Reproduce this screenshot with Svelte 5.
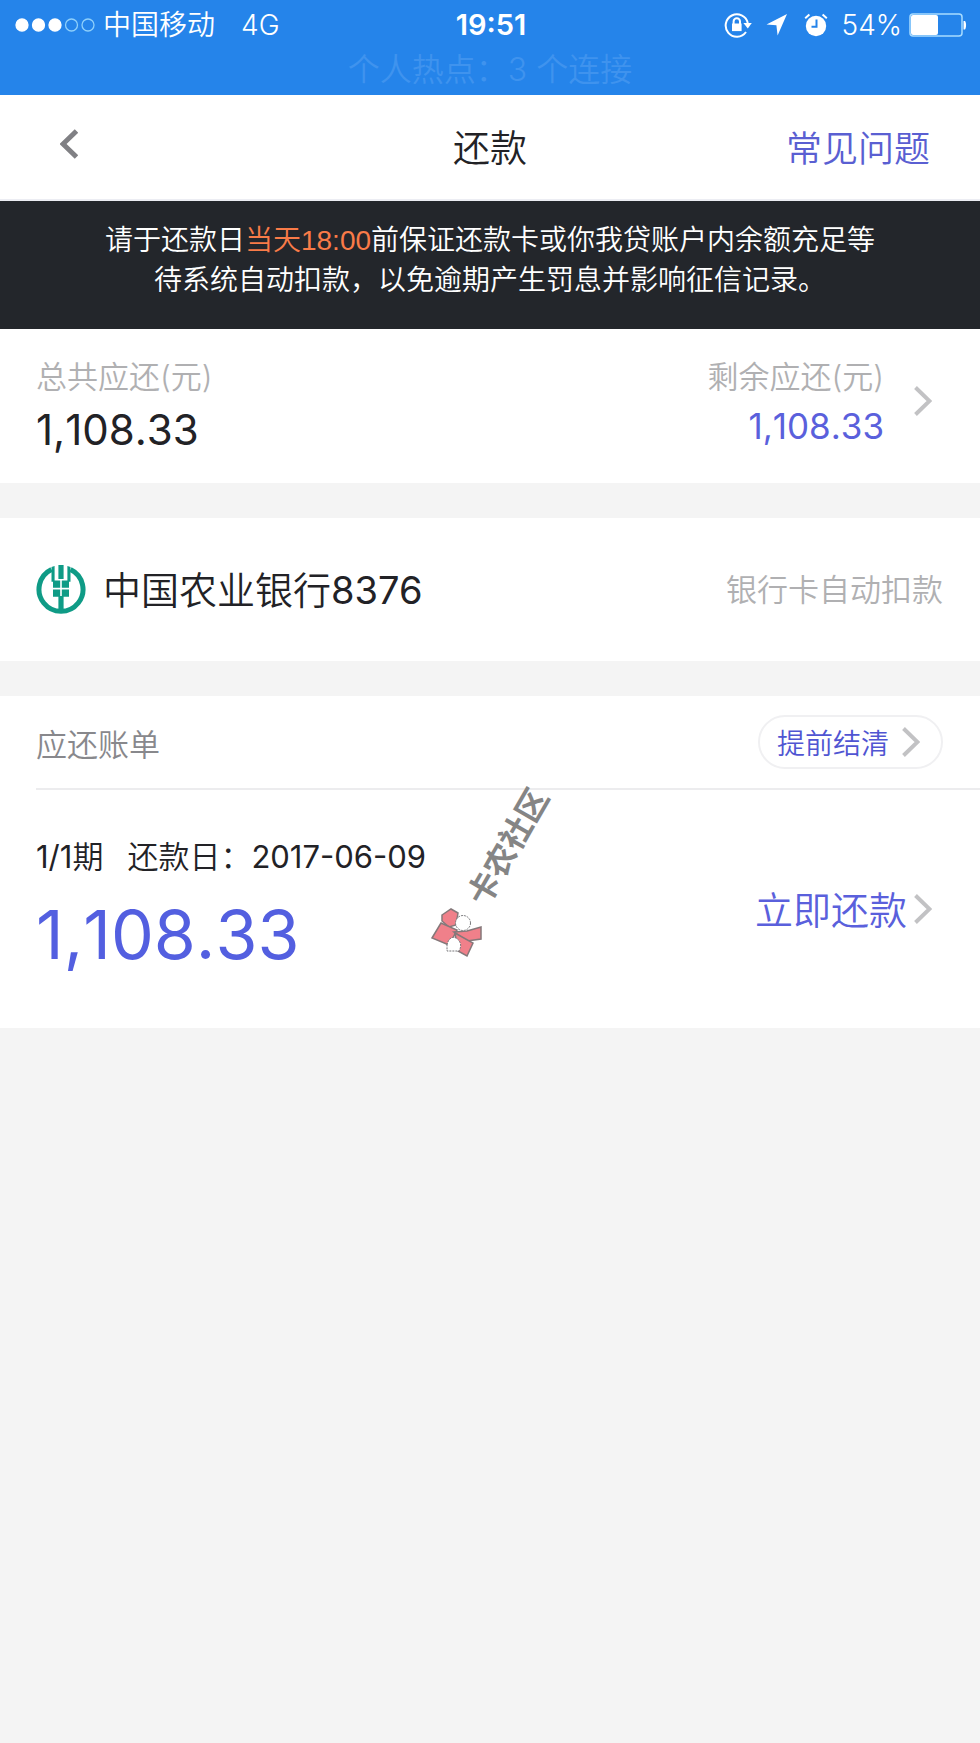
<script lang="ts">
	const signal = 3;
	const battery = 54;
	const total = "1,108.33";
	const remaining = "1,108.33";
	const bank = { name: "中国农业银行", tail: "8376" };
	const bill = { period: "1/1", date: "2017-06-09", amount: "1,108.33" };
</script>

{#snippet chevron()}
	<svg class="chevron" viewBox="0 0 18 30" aria-hidden="true">
		<path d="M1.5 1.5 15.5 15 1.5 28.5" />
	</svg>
{/snippet}

<div class="page">
	<div class="status">
		<div class="status-row">
			<div class="side">
				<svg class="dots" viewBox="0 0 80 14" aria-hidden="true">
					{#each Array(5) as _, i}
						<circle class:on={i < signal} cx={7 + i * 16.5} cy="7" r="6" />
					{/each}
				</svg>
				<span class="carrier">中国移动</span>
				<span>4G</span>
			</div>
			<strong>19:51</strong>
			<div class="side right">
				<svg class="lock" viewBox="0 0 28 26" aria-hidden="true">
					<path class="line" d="M22 20A11.2 11.2 0 1 1 23.8 11" />
					<path d="M19.4 11h8.4l-4 5.4z" />
					<path d="M8 11.5h9.6v7.6H8z" />
					<path class="line" d="M9.6 12V9.4a3.2 3.2 0 0 1 6.4 0V12" />
				</svg>
				<svg class="arrow" viewBox="0 0 24 24" aria-hidden="true">
					<path d="M22 1 1.5 11.4 11.4 12.2 12.6 22.5z" />
				</svg>
				<svg class="alarm" viewBox="0 0 24 24" aria-hidden="true">
					<circle cx="12" cy="13" r="10.2" />
					<path class="line" d="M1.2 5.2 5.4 1.5M22.8 5.2 18.6 1.5" />
					<path class="hand" d="M12.5 6.5v7.2H7.5" />
				</svg>
				<span>{battery}%</span>
				<svg class="battery" viewBox="0 0 58 24" aria-hidden="true">
					<rect class="line" x="1" y="1" width="52" height="22" rx="3" />
					<rect x="2" y="2" width={battery * 0.5} height="20" rx="2" />
					<path d="M54.5 8h1.5c1.4 1.2 1.4 7.2 0 8.4h-1.5z" />
				</svg>
			</div>
		</div>
		<div class="hotspot">个人热点：3 个连接</div>
	</div>

	<header>
		<button class="back" aria-label="返回">
			<svg viewBox="0 0 18 30" aria-hidden="true">
				<path d="M16.5 2 3 15 16.5 28" />
			</svg>
		</button>
		<h1>还款</h1>
		<a href="#faq">常见问题</a>
	</header>

	<p class="notice">
		请于还款日<em>当天18:00</em>前保证还款卡或你我贷账户内余额充足等<br />待系统自动扣款，以免逾期产生罚息并影响征信记录。
	</p>

	<section class="summary">
		<div>
			<div class="label">总共应还(元)</div>
			<div class="total">{total}</div>
		</div>
		<a class="remaining" href="#remaining">
			<span>
				<span class="label">剩余应还(元)</span>
				<span class="rest">{remaining}</span>
			</span>
			{@render chevron()}
		</a>
	</section>

	<section class="bank">
		<svg class="logo" viewBox="0 0 50 50" aria-hidden="true">
			<path class="ring" d="M15.500 4.500A22 22 0 1 0 34.500 4.500" />
			<path d="M22.400 0h5.200v14h-5.200z" />
			<path d="M15.500 2 18.600 1v14.600h5.600v7.200H17v-6h-1.500z" />
			<path d="M34.500 2 31.400 1v14.600h-5.600v7.200H33v-6h1.500z" />
			<path d="M17 24.400h7.200v7.400H17zM25.800 24.400H33v7.400h-7.200z" />
			<path d="M22.400 31h5.200v17h-5.200z" />
		</svg>
		<span class="bank-name">{bank.name}<span class="num">{bank.tail}</span></span>
		<span class="label">银行卡自动扣款</span>
	</section>

	<section class="bill">
		<div class="bill-head">
			<h2>应还账单</h2>
			<button class="settle">提前结清 {@render chevron()}</button>
		</div>
		<div class="bill-body">
			<div>
				<div class="due">
					<span><span class="num">{bill.period}</span>期</span>
					<span>还款日：<span class="num">{bill.date}</span></span>
				</div>
				<div class="amount">{bill.amount}</div>
			</div>
			<button class="pay"><span>立即还款</span>{@render chevron()}</button>
		</div>

		<svg class="stamp" viewBox="0 0 160 200">
			<text transform="translate(76 138) rotate(-60)">卡农社区</text>
			<g class="petals">
				<path d="M32 145 41 139 48 143 46 155 39 157 32 151z" />
				<path d="M31 153 47 160 39 175 22 168z" />
				<path d="M44 162 57 161 71 157 71 169 57 171z" />
				<path d="M45 163 63 173 57 186 48 181z" />
			</g>
			<g class="holes">
				<circle cx="53" cy="153" r="7.5" />
				<path d="M37 175c1-6 5-9 9-7 5 3 6 8 3 13h-12z" />
			</g>
		</svg>
	</section>
</div>

<style>
	:global(body) {
		margin: 0;
		background: #f4f4f4;
	}

	.page {
		font-family: Inter, "Noto Sans CJK SC", sans-serif;
		font-weight: 350;
		color: #222226;
	}

	button {
		font: inherit;
		padding: 0;
		border: 0;
		background: none;
		cursor: pointer;
	}

	a {
		text-decoration: none;
	}

	h1,
	h2,
	p {
		margin: 0;
		font-weight: inherit;
	}

	svg {
		display: block;
		flex: none;
	}

	.status {
		height: 95px;
		box-sizing: border-box;
		padding-top: 4px;
		background: #2584ea;
		color: #fff;
		font-size: 28px;
		line-height: 42px;
	}

	.status-row {
		display: flex;
		align-items: center;
		padding: 0 13px 0 15px;
	}

	.status-row strong {
		font-size: 29px;
		font-weight: 600;
	}

	.side {
		flex: 1;
		display: flex;
		align-items: center;
	}

	.right {
		justify-content: flex-end;
	}

	.status svg {
		fill: #fff;
	}

	.status .line {
		fill: none;
		stroke: #fff;
		stroke-width: 2;
	}

	.dots {
		width: 80px;
		height: 14px;
	}

	.dots circle {
		fill: none;
		stroke: #8fd0fb;
		stroke-width: 1.3;
	}

	.dots .on {
		fill: #fff;
		stroke: #fff;
	}

	.carrier {
		margin: 0 26px 0 8px;
	}

	.lock {
		width: 28px;
		height: 26px;
		margin-right: 13px;
	}

	.arrow {
		width: 24px;
		height: 24px;
		margin-right: 15px;
	}

	.alarm {
		width: 24px;
		height: 24px;
		margin-right: 14px;
	}

	.alarm .hand {
		fill: none;
		stroke: #2584ea;
		stroke-width: 2;
	}

	.battery {
		width: 58px;
		height: 24px;
		margin-left: 7px;
	}

	.battery .line {
		stroke: #a8dcff;
		stroke-width: 1.5;
	}

	.hotspot {
		font-size: 32px;
		line-height: 48px;
		text-align: center;
		color: #3f93ee;
	}

	header {
		display: grid;
		grid-template-columns: 1fr auto 1fr;
		align-items: center;
		height: 106px;
		box-sizing: border-box;
		padding: 0 50px 2px;
		border-bottom: 2px solid #ecedf3;
		background: #fff;
	}

	.back {
		justify-self: start;
		padding: 10px;
	}

	.back svg {
		width: 18px;
		height: 30px;
		margin-bottom: 4px;
		fill: none;
		stroke: #808084;
		stroke-width: 5;
	}

	h1 {
		font-size: 37px;
	}

	header a {
		justify-self: end;
		font-size: 36px;
		color: #5a5fd2;
	}

	.notice {
		padding: 20px 20px 28px;
		background: #23262b;
		color: #fff;
		font-family: "Liberation Sans", "Noto Sans CJK SC", sans-serif;
		font-size: 28px;
		line-height: 40px;
		text-align: center;
	}

	em {
		font-style: normal;
		color: #f97b48;
	}

	section {
		background: #fff;
	}

	.label {
		display: block;
		font-size: 31px;
		line-height: 46px;
		color: #b0b0b2;
	}

	.chevron {
		width: 18px;
		height: 30px;
		fill: none;
		stroke: #c2c2c4;
		stroke-width: 4;
	}

	.summary {
		display: flex;
		justify-content: space-between;
		height: 154px;
		box-sizing: border-box;
		padding: 25px 48px 0 36px;
	}

	.num {
		font-weight: 400;
	}

	.total,
	.rest,
	.amount {
		font-weight: 400;
		font-kerning: none;
	}

	.total {
		font-size: 42px;
		line-height: 60px;
	}

	.remaining {
		display: flex;
		align-items: flex-start;
		gap: 30px;
		text-align: right;
	}

	.remaining .chevron {
		margin-top: 32px;
	}

	.rest {
		display: block;
		font-size: 35px;
		line-height: 52px;
		color: #5a60dc;
	}

	.bank {
		display: flex;
		align-items: center;
		height: 143px;
		margin: 35px 0;
		padding: 0 37px 0 36px;
	}

	.logo {
		width: 50px;
		height: 50px;
		margin-right: 17px;
		fill: #0f9b86;
	}

	.logo .ring {
		fill: none;
		stroke: #0f9b86;
		stroke-width: 5;
	}

	.bank-name {
		flex: 1;
		padding-bottom: 4px;
		font-size: 38px;
	}

	.bill {
		position: relative;
		padding-left: 36px;
	}

	.bill-head {
		display: flex;
		align-items: center;
		justify-content: space-between;
		height: 92px;
		padding-right: 37px;
		border-bottom: 2px solid #ececee;
	}

	h2 {
		font-size: 31px;
		color: #88888c;
	}

	.settle {
		display: flex;
		align-items: center;
		gap: 13px;
		height: 54px;
		padding: 0 21px 0 17px;
		border: 2px solid #f0f0f2;
		border-radius: 27px;
		font-size: 28px;
		color: #5055d2;
	}

	.bill-body {
		display: flex;
		justify-content: space-between;
		align-items: center;
		height: 238px;
		padding-right: 48px;
	}

	.due {
		display: flex;
		gap: 24px;
		font-size: 31px;
		line-height: 46px;
	}

	.amount {
		margin-top: 4px;
		font-size: 68px;
		line-height: 100px;
		color: #535fe0;
	}

	.pay {
		display: flex;
		align-items: center;
		gap: 7px;
		font-size: 38px;
		color: #5a60dc;
	}

	.pay span {
		padding-bottom: 4px;
	}

	.stamp {
		position: absolute;
		top: 74px;
		left: calc(50% - 80px);
		width: 160px;
		height: 200px;
		pointer-events: none;
	}

	.stamp text {
		font-size: 32px;
		font-weight: 700;
		fill: #858585;
	}

	.petals {
		fill: #f0808a;
		stroke: #85787a;
		stroke-width: 1.5;
	}

	.holes {
		fill: #fff;
		stroke: #77777a;
		stroke-dasharray: 2 1;
	}
</style>
